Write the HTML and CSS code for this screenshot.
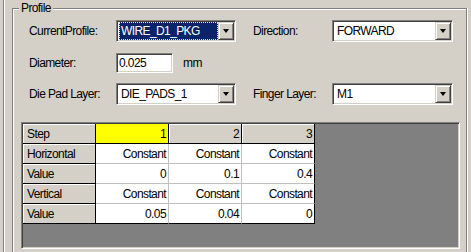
FILE: index.html
```html
<!DOCTYPE html>
<html lang="en">

<head>
    <meta charset="UTF-8">
    <meta name="viewport" content="width=device-width, initial-scale=1.0">
    <title>Wire Profile</title>
    <link rel="stylesheet" href="styles.css">
</head>

<body>
    <div class="window">
        <div class="group">
            <span class="group-title">Profile</span>
            <div class="form">
                <label class="lbl">CurrentProfile:</label>
                <div class="combo combo-a">
                    <span class="combo-text focus"><span class="sel">WIRE_D1_PKG</span></span>
                    <span class="combo-btn"><i class="arrow"></i></span>
                </div>
                <label class="lbl lbl-right">Direction:</label>
                <div class="combo combo-b">
                    <span class="combo-text">FORWARD</span>
                    <span class="combo-btn"><i class="arrow"></i></span>
                </div>

                <label class="lbl">Diameter:</label>
                <div class="diam">
                    <input class="edit" type="text" value="0.025">
                    <span class="unit">mm</span>
                </div>

                <label class="lbl">Die Pad Layer:</label>
                <div class="combo combo-a">
                    <span class="combo-text">DIE_PADS_1</span>
                    <span class="combo-btn"><i class="arrow"></i></span>
                </div>
                <label class="lbl lbl-right">Finger Layer:</label>
                <div class="combo combo-b">
                    <span class="combo-text">M1</span>
                    <span class="combo-btn"><i class="arrow"></i></span>
                </div>
            </div>

            <div class="grid-box">
                <table class="grid">
                    <tr>
                        <th class="rh">Step</th>
                        <th class="ch current">1</th>
                        <th class="ch">2</th>
                        <th class="ch last-col">3</th>
                    </tr>
                    <tr>
                        <th class="rh">Horizontal</th>
                        <td>Constant</td>
                        <td>Constant</td>
                        <td class="last-col">Constant</td>
                    </tr>
                    <tr>
                        <th class="rh">Value</th>
                        <td>0</td>
                        <td>0.1</td>
                        <td class="last-col">0.4</td>
                    </tr>
                    <tr>
                        <th class="rh">Vertical</th>
                        <td>Constant</td>
                        <td>Constant</td>
                        <td class="last-col">Constant</td>
                    </tr>
                    <tr class="last-row">
                        <th class="rh">Value</th>
                        <td>0.05</td>
                        <td>0.04</td>
                        <td class="last-col">0</td>
                    </tr>
                </table>
            </div>
        </div>
    </div>
</body>

</html>
```

FILE: styles.css
```css
* {
    box-sizing: border-box;
}

body {
    margin: 0;
    background-color: #d4d0c8;
    font-family: "Liberation Sans", Arial, sans-serif;
    font-size: 12px;
    letter-spacing: -0.6px;
    color: #000;
    overflow: hidden;
}

.window {
    margin-left: 3px;
    height: 252px;
    padding: 8px 0 0 8px;
    border-left: 1px solid #808080;
    box-shadow: inset 1px 0 0 #fff;
    overflow: hidden;
}

/* etched group box, bottom edge is off screen */
.group {
    position: relative;
    width: 455px;
    height: 244px;
    padding: 11px 0 0 8px;
    border: 1px solid #808080;
    border-bottom: none;
    box-shadow: inset 1px 1px 0 #fff, 1px 0 0 #fff;
}

.group-title {
    position: absolute;
    top: -8px;
    left: 6px;
    padding: 0 2px;
    line-height: 14px;
    background-color: #d4d0c8;
}

.form {
    display: grid;
    grid-template-columns: 87px 120px 17px 79px 121px;
    grid-template-rows: 22px 21px 22px;
    row-gap: 10px;
    margin-left: 8px;
}

.lbl {
    grid-column: 1;
    align-self: center;
}

.lbl-right {
    grid-column: 4;
}

.combo {
    display: flex;
    height: 22px;
    background-color: #fff;
    border: 1px solid;
    border-color: #808080 #fff #fff #808080;
    box-shadow: inset 1px 1px 0 #404040, inset -1px -1px 0 #d4d0c8;
    padding: 1px;
}

.combo-a {
    grid-column: 2;
}

.combo-b {
    grid-column: 5;
}

.combo-text {
    flex: 1;
    display: flex;
    align-items: center;
    padding-left: 3px;
    white-space: nowrap;
}

.combo-text.focus {
    margin-left: 1px;
    padding-left: 0;
    background-color: #0a246a;
    color: #fff;
    outline: 1px dotted #f4e48c;
    outline-offset: -1px;
}

.sel {
    padding-left: 2px;
}

.combo-btn {
    width: 16px;
    display: flex;
    align-items: center;
    justify-content: center;
    background-color: #d4d0c8;
    border: 1px solid;
    border-color: #d4d0c8 #404040 #404040 #d4d0c8;
    box-shadow: inset 1px 1px 0 #fff, inset -1px -1px 0 #808080;
}

.arrow {
    width: 0;
    height: 0;
    border-left: 3.5px solid transparent;
    border-right: 3.5px solid transparent;
    border-top: 4px solid #000;
}

.diam {
    grid-column: 2 / 4;
    display: flex;
    align-items: flex-end;
}

.edit {
    width: 57px;
    height: 20px;
    margin: 0;
    padding: 0 0 0 2px;
    font: inherit;
    letter-spacing: inherit;
    color: #000;
    background-color: #fff;
    border: 1px solid;
    border-color: #808080 #fff #fff #808080;
    box-shadow: inset 1px 1px 0 #404040, inset -1px -1px 0 #d4d0c8;
    outline: none;
}

.unit {
    align-self: center;
    margin: 1px 0 0 10px;
}

/* property grid */
.grid-box {
    width: 439px;
    height: 127px;
    margin-top: 17px;
    background-color: #808080;
    border: 1px solid;
    border-color: #808080 #fff #fff #808080;
    box-shadow: inset 1px 1px 0 #404040, inset -1px -1px 0 #d4d0c8;
    padding: 1px;
}

.grid {
    border-collapse: separate;
    border-spacing: 0;
}

.grid th,
.grid td {
    width: 73px;
    height: 20px;
    padding: 0 2px 0 0;
    font-weight: normal;
    text-align: right;
    white-space: nowrap;
    border-right: 1px solid #c0c0c0;
    border-bottom: 1px solid #c0c0c0;
    background-color: #fff;
}

.grid th.rh {
    text-align: left;
    padding: 0 0 0 4px;
    background-color: #d4d0c8;
    border-right-color: #000;
    border-bottom-color: #000;
    box-shadow: inset 1px 1px 0 #fff;
}

.grid th.ch {
    background-color: #d4d0c8;
    border-right-color: #000;
    border-bottom-color: #000;
    box-shadow: inset 1px 1px 0 #fff;
}

.grid th.current {
    background-color: #ffff00;
    box-shadow: none;
}

.grid .last-col {
    border-right-color: #000;
}

.grid .last-row td {
    border-bottom-color: #000;
}
```
